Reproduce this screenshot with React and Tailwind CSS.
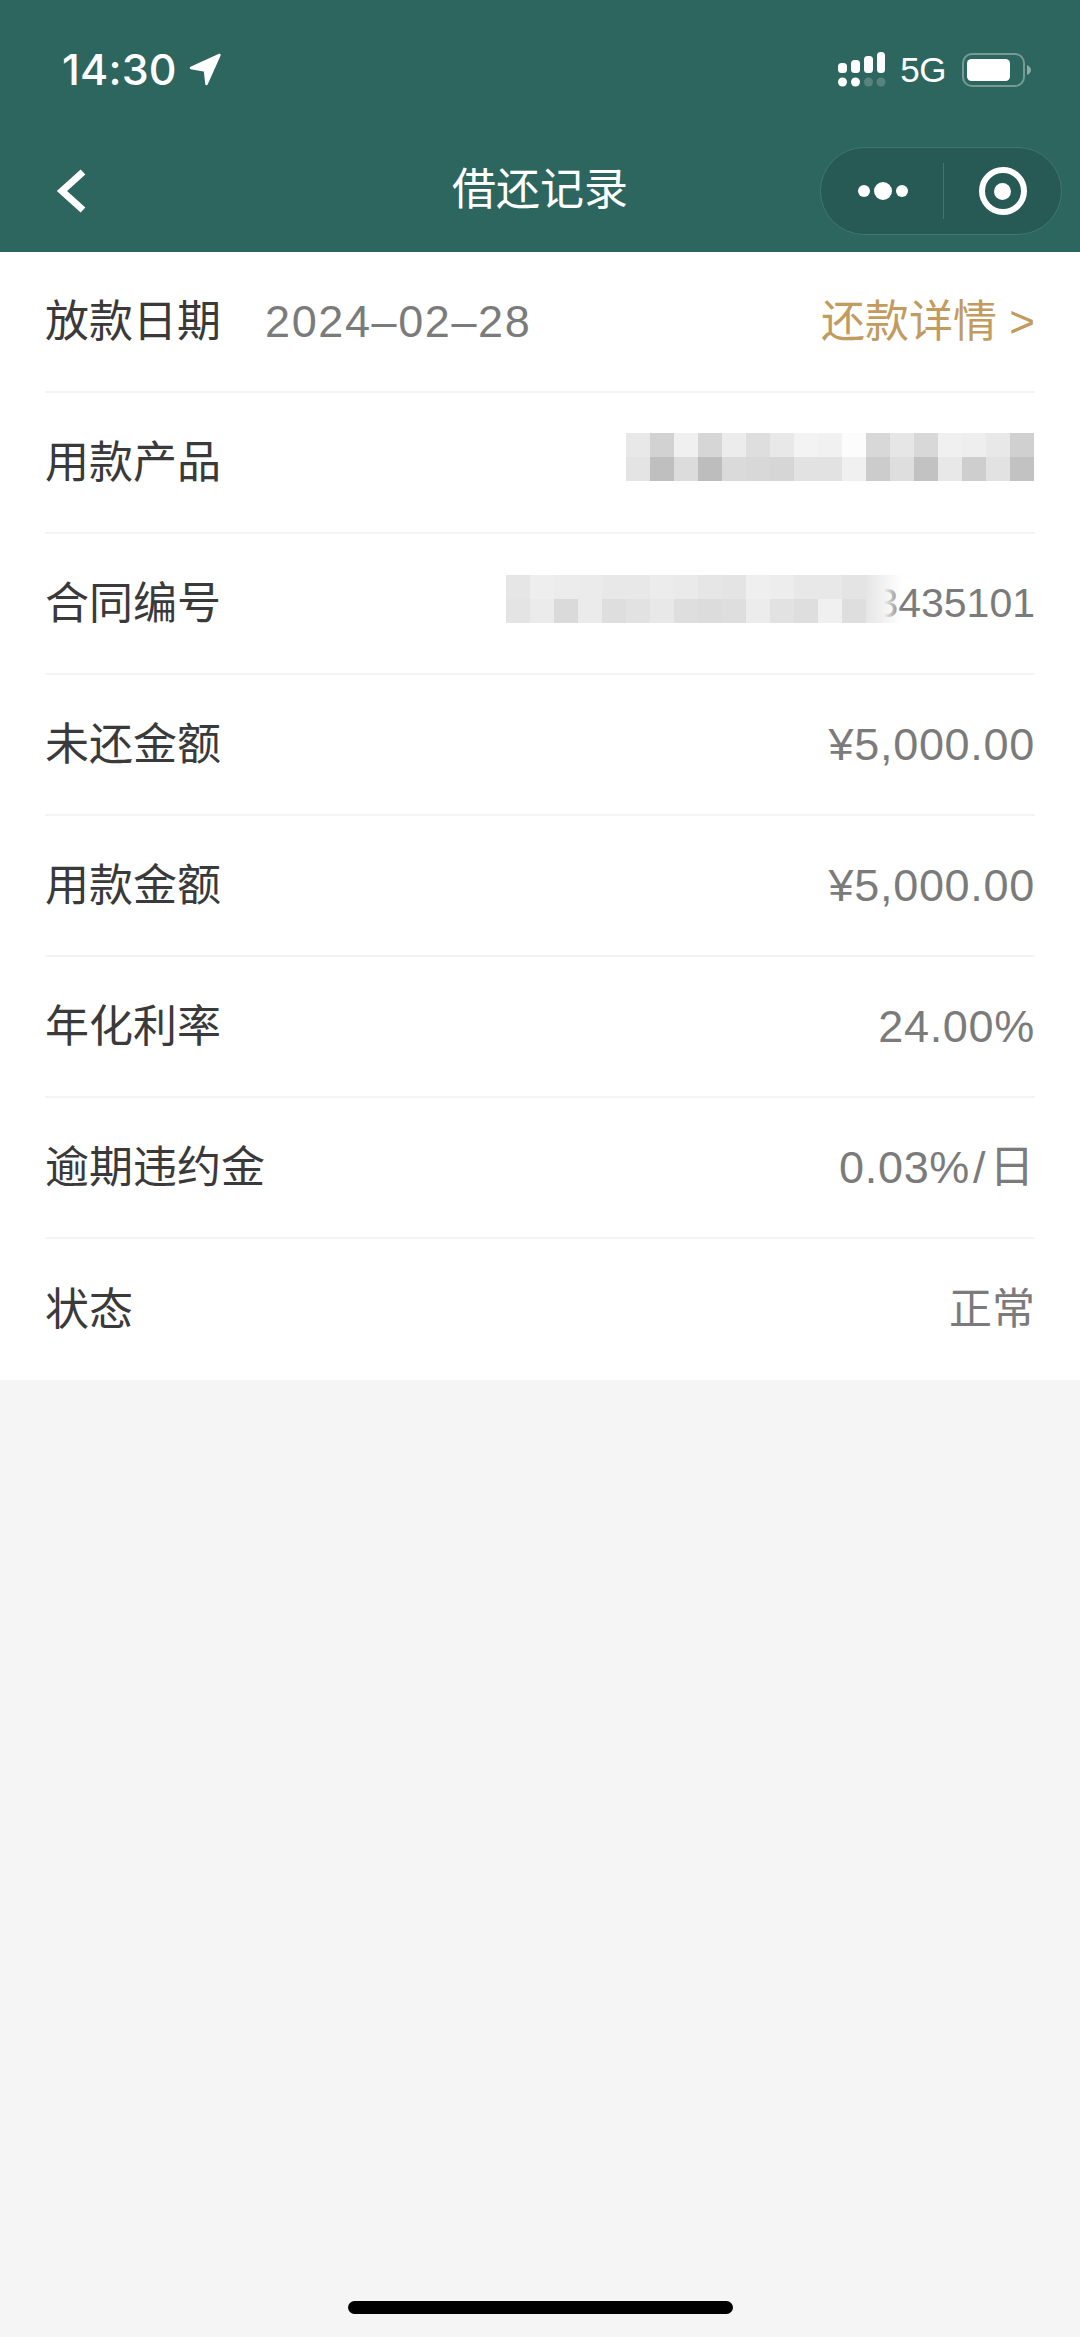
const productTiles = [
  ["#e8e8e8", "#d2d2d2", "#f0f0f0", "#d6d6d6", "#ececec", "#dedede", "#e8e8e8", "#f3f3f3", "#f1f1f1", "#fcfcfc", "#d8d8d8", "#e6e6e6", "#d8d8d8", "#f0f0f0", "#eeeeee", "#e8e8e8", "#d0d0d0"],
  ["#e4e4e4", "#bfbfbf", "#dcdcdc", "#bdbdbd", "#dadada", "#d8d8d8", "#d6d6d6", "#e2e2e2", "#e2e2e2", "#f0f0f0", "#cccccc", "#dedede", "#c2c2c2", "#e8e8e8", "#cecece", "#e2e2e2", "#c2c2c2"],
];

const contractTiles = [
  ["#e6e6e6", "#eeeeee", "#ececec", "#ebebeb", "#e8e8e8", "#e8e8e8", "#ececec", "#eaeaea", "#e6e6e6", "#e4e4e4", "#efefef", "#ededed", "#e8e8e8", "#e8e8e8", "#e4e4e4"],
  ["#e4e4e4", "#ebebeb", "#dadada", "#ebebeb", "#dedede", "#e2e2e2", "#e8e8e8", "#dedede", "#dcdcdc", "#dedede", "#ececec", "#e2e2e2", "#dedede", "#f0f0f0", "#dedede"],
];

function Mosaic({ tiles }) {
  return (
    <div className="flex flex-col">
      {tiles.map((row, i) => (
        <div key={i} className="flex">
          {row.map((color, j) => (
            <div key={j} className="w-[24px] h-[24px]" style={{ backgroundColor: color }} />
          ))}
        </div>
      ))}
    </div>
  );
}

function Row({ label, children, last }) {
  return (
    <div className={`h-[141px] flex items-center justify-between ${last ? "" : "border-b-2 border-[#f4f4f4]"}`}>
      <span className="text-[#3a3a3a] text-[44px]">{label}</span>
      {children}
    </div>
  );
}

function Value({ children }) {
  return <span className="text-[#7b7b7b] text-[45px] tracking-[0.7px]">{children}</span>;
}

function Signal() {
  return (
    <svg width="48" height="36" viewBox="0 0 48 36" fill="#fff">
      <rect x="0" y="11" width="9" height="10" rx="3.5" />
      <rect x="13" y="8" width="9" height="13" rx="3.5" />
      <rect x="26" y="4" width="9" height="17" rx="3.5" />
      <rect x="39" y="0" width="8" height="21" rx="3.5" />
      <circle cx="4.5" cy="30" r="4.5" />
      <circle cx="17.5" cy="30" r="4.5" />
      <circle cx="30.5" cy="30" r="4.5" fillOpacity="0.2" />
      <circle cx="43" cy="30" r="4.5" fillOpacity="0.2" />
    </svg>
  );
}

function Battery() {
  return (
    <svg width="70" height="34" viewBox="0 0 70 34" fill="none">
      <rect x="1" y="1" width="61" height="32" rx="9" stroke="#fff" strokeOpacity="0.35" strokeWidth="2" />
      <rect x="5" y="6" width="43" height="22" rx="4.5" fill="#fff" />
      <path d="M65 12c2.500 1 4 3 4 5s-1.500 4-4 5z" fill="#fff" fillOpacity="0.45" />
    </svg>
  );
}

export default function App() {
  return (
    <div className="relative min-h-[2337px] bg-[#f5f5f5] font-['Liberation_Sans','Noto_Sans_CJK_SC',sans-serif]">
      {/* status bar + nav */}
      <div className="h-[252px] bg-[#2d665f] text-white">
        <div className="h-[132px] pl-[62px] pr-[48px] pt-[49px] flex items-start justify-between">
          <div className="flex items-center gap-[12px] h-[40px]">
            <span className="text-[43px] leading-[40px] font-medium font-['Inter',sans-serif] tracking-[0.2px]">14:30</span>
            <svg width="33" height="33" viewBox="0 0 33 33" fill="#fff" stroke="#fff" strokeWidth="2.500" strokeLinejoin="round">
              <path d="M30.500 2 2 15l14 2.500L17.500 31z" />
            </svg>
          </div>
          <div className="flex items-center h-[36px] mt-[3px]">
            <Signal />
            <span className="ml-[14px] text-[35px] leading-[36px] tracking-[-0.5px]">5G</span>
            <span className="ml-[16px]"><Battery /></span>
          </div>
        </div>
        <div className="relative h-[120px] flex items-center justify-center">
          <svg className="absolute left-[56px] top-[34px]" width="32" height="48" viewBox="0 0 32 48" fill="none">
            <path d="M27 6 6 25l21 19" stroke="#fff" strokeWidth="7" />
          </svg>
          <span className="text-[44px] -mt-[4px]">借还记录</span>
          <div className="absolute left-[820px] top-[15px] w-[242px] h-[88px] rounded-full bg-[#275a54] border border-[#3f7770] flex items-center">
            <div className="w-[120px] flex items-center justify-center gap-[4px] ml-[2px]">
              <div className="w-[12px] h-[12px] rounded-full bg-white" />
              <div className="w-[18px] h-[18px] rounded-full bg-white" />
              <div className="w-[12px] h-[12px] rounded-full bg-white" />
            </div>
            <div className="w-px h-[56px] bg-[#3f7770]" />
            <div className="flex-1 flex items-center justify-center">
              <div className="w-[48px] h-[48px] rounded-full border-[6px] border-white flex items-center justify-center">
                <div className="w-[17px] h-[17px] rounded-full bg-white" />
              </div>
            </div>
          </div>
        </div>
      </div>

      {/* detail list */}
      <div className="bg-white pl-[45px] pr-[45px]">
        <Row label="放款日期">
          <span className="flex-1 ml-[44px]"><span className="text-[#7b7b7b] text-[45px] tracking-[1.600px]">2024–02–28</span></span>
          <span className="text-[#c29b5f] text-[44px]">还款详情 &gt;</span>
        </Row>
        <Row label="用款产品">
          <div className="mb-[12px] mr-[1px]"><Mosaic tiles={productTiles} /></div>
        </Row>
        <Row label="合同编号">
          <div className="flex items-center">
            <div className="relative z-10 -translate-y-[5px]">
              <Mosaic tiles={contractTiles} />
              <div className="absolute left-full top-0 w-[36px] h-[48px] bg-gradient-to-r from-[#e6e6e6] via-[#f2f2f2] to-transparent" />
            </div>
            <span className="ml-[9px] text-[#7b7b7b] text-[41px]">3435101</span>
          </div>
        </Row>
        <Row label="未还金额"><Value>¥5,000.00</Value></Row>
        <Row label="用款金额"><Value>¥5,000.00</Value></Row>
        <Row label="年化利率"><Value>24.00%</Value></Row>
        <Row label="逾期违约金">
          <span className="text-[#7b7b7b] text-[45px] tracking-[0.7px]">0.03%<span className="mx-[3px]">/</span>日</span>
        </Row>
        <Row label="状态" last><span className="text-[#7b7b7b] text-[43px]">正常</span></Row>
      </div>

      <div className="absolute left-[348px] top-[2301px] w-[385px] h-[13px] rounded-full bg-black" />
    </div>
  );
}
